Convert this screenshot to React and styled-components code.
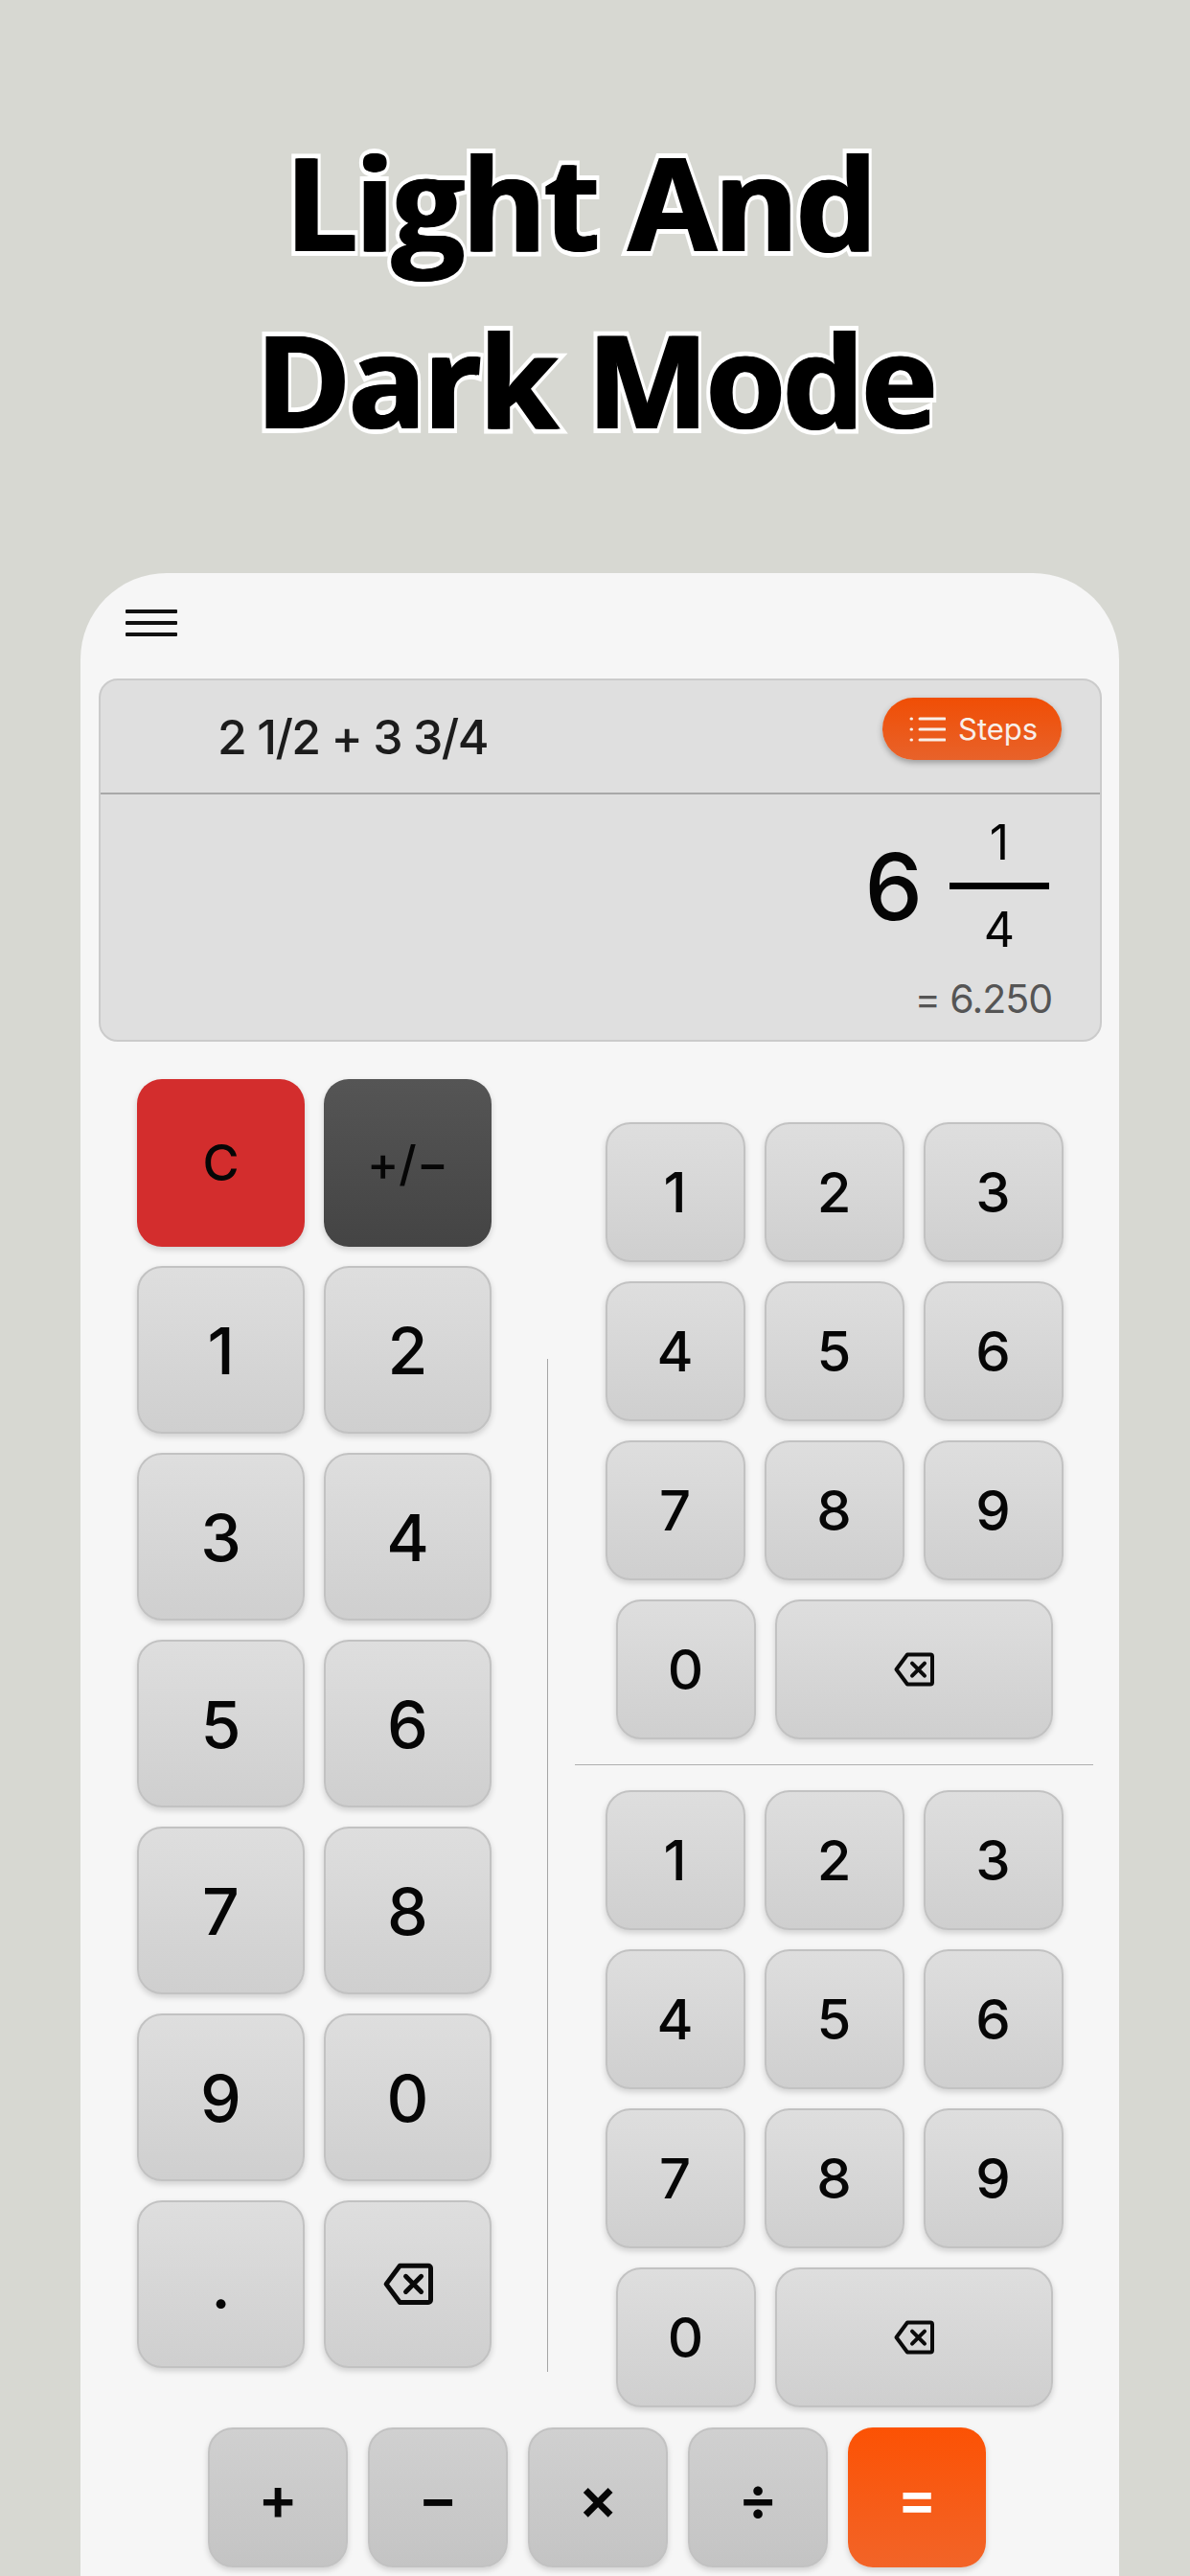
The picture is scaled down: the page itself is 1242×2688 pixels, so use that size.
import styled, { createGlobalStyle } from 'styled-components'

const GlobalStyle = createGlobalStyle`
  html, body {
    margin: 0;
    padding: 0;
    background: #d7d8d2;
  }
  * {
    box-sizing: border-box;
  }
`

const Screen = styled.div`
  width: 1242px;
  height: 2688px;
  overflow: hidden;
  display: flex;
  flex-direction: column;
  background: #d7d8d2;
  font-family: Inter, 'Liberation Sans', sans-serif;
`

const Title = styled.h1`
  margin: 0;
  padding-top: 118px;
  height: 598px;
  font-family: 'Open Sans', sans-serif;
  font-size: 134px;
  font-weight: 700;
  line-height: 185px;
  letter-spacing: -2.6px;
  text-align: center;
  color: #000;
  -webkit-text-stroke: 10px #fff;
  paint-order: stroke fill;
`

const TitleLine = styled.div`
  white-space: pre;
  text-shadow: 2px 0 0 #000, -1px 0 0 #000;
`

const Card = styled.div`
  flex: 1;
  margin-left: 84px;
  width: 1084px;
  padding: 0 18px 0 19px;
  background: #f6f6f6;
  border-radius: 90px 90px 0 0;
  display: flex;
  flex-direction: column;
`

const Hamburger = styled.div`
  margin: 38px 0 0 28px;
  width: 54px;
  height: 72px;
  display: flex;
  flex-direction: column;
  gap: 8px;
`

const HamburgerLine = styled.span`
  display: block;
  height: 4px;
  border-radius: 1px;
  background: #111;
`

const Display = styled.div`
  height: 379px;
  background: #dfdfdf;
  border: 2px solid #cbcbcb;
  border-radius: 20px;
  display: flex;
  flex-direction: column;
`

const ExpressionRow = styled.div`
  height: 119px;
  flex-shrink: 0;
  padding: 18px 40px 0 122px;
  border-bottom: 2px solid #a8a8a8;
  display: flex;
  align-items: flex-start;
  justify-content: space-between;
`

const Expression = styled.div`
  margin-top: 6px;
  font-size: 50px;
  font-weight: 500;
  line-height: 70px;
  color: #1c1c1c;
  letter-spacing: -1.5px;
`

const StepsButton = styled.button`
  width: 187px;
  height: 65px;
  padding: 0 0 0 28px;
  border: 0;
  border-radius: 33px;
  background: linear-gradient(#f04e05, #e8622a);
  box-shadow: 0 3px 6px rgba(0, 0, 0, 0.3);
  color: #f8efe9;
  display: flex;
  align-items: center;
  gap: 13px;
  font-family: Inter, sans-serif;
  font-size: 31px;
`

const ResultArea = styled.div`
  flex: 1;
  padding: 8px 53px 0 0;
  display: flex;
  flex-direction: column;
  align-items: flex-end;
`

const MixedNumber = styled.div`
  display: flex;
  align-items: center;
  gap: 28px;
  color: #050505;
`

const Whole = styled.div`
  font-size: 96px;
  font-weight: 500;
  line-height: 100px;
`

const Fraction = styled.div`
  width: 104px;
  display: flex;
  flex-direction: column;
  align-items: center;
  font-size: 50px;
  line-height: 84px;
`

const FractionBar = styled.div`
  width: 100%;
  height: 7px;
  background: #000;
`

const Decimal = styled.div`
  margin: 6px -3px 0 0;
  font-size: 41px;
  line-height: 48px;
  color: #555;
  letter-spacing: -1px;
`

const Keypad = styled.div`
  margin-top: 39px;
  padding-left: 40px;
  display: flex;
  align-items: flex-start;
`

const LeftPad = styled.div`
  width: 369px;
  display: grid;
  grid-template-columns: repeat(2, 175px);
  grid-auto-rows: 175px;
  gap: 20px;
`

const VerticalRule = styled.div`
  margin: 292px 0 0 59px;
  width: 1px;
  height: 1057px;
  background: #a6a6a6;
`

const RightColumn = styled.div`
  margin-left: 28px;
  width: 541px;
  padding-top: 45px;
`

const NumberGroup = styled.div`
  display: flex;
  flex-direction: column;
  gap: 20px;
`

const KeyRow = styled.div`
  display: flex;
  justify-content: center;
  gap: ${(p) => p.$gap || 20}px;
`

const HorizontalRule = styled.div`
  margin: 26px 0;
  height: 1px;
  background: #aeaeae;
`

const Key = styled.button`
  flex-shrink: 0;
  width: ${(p) => p.$w || 146}px;
  height: ${(p) => p.$h || 146}px;
  padding: 0;
  border: 2px solid #c2c2c2;
  border-radius: 26px;
  background: linear-gradient(#dedede, #cfcfcf);
  box-shadow: 0 3px 6px rgba(0, 0, 0, 0.16);
  display: flex;
  align-items: center;
  justify-content: center;
  color: #060606;
  font-family: Inter, sans-serif;
  font-weight: 500;
  font-size: ${(p) => p.$size || 58}px;
`

const ClearKey = styled(Key)`
  border: 0;
  background: #d32d2d;
  font-size: 52px;
`

const SignKey = styled(Key)`
  border: 0;
  background: linear-gradient(#555, #444);
  font-size: 50px;
`

const OperatorRow = styled(KeyRow)`
  margin-top: 21px;
  padding-right: 7px;
`

const OperatorKey = styled(Key)`
  background: linear-gradient(#d0d0d0, #c4c4c4);
  font-weight: 600;
  font-size: 62px;
`

const EqualsKey = styled(OperatorKey)`
  border: 0;
  background: linear-gradient(#fc5204, #f26428);
  color: #fff;
`

const BackspaceIcon = ({ size }) => (
  <svg width={size} height={size * 0.86} viewBox="0 0 42 36" fill="none" stroke="#0a0a0a" strokeWidth="4" strokeLinejoin="round" strokeLinecap="round">
    <path d="M14 2.5h24a2 2 0 0 1 2 2v27a2 2 0 0 1-2 2H14L2.5 18z" />
    <path d="M19 11.5l13 13M32 11.5l-13 13" />
  </svg>
)

const ListIcon = () => (
  <svg width="38" height="30" viewBox="0 0 38 30" fill="none" stroke="#f8efe9" strokeWidth="3" strokeLinecap="round">
    <path d="M11 4h26M11 15h26M11 26h26" />
    <path d="M2 4h.5M2 15h.5M2 26h.5" />
  </svg>
)

const NumberKeys = () => (
  <NumberGroup>
    {[['1', '2', '3'], ['4', '5', '6'], ['7', '8', '9']].map((row) => (
      <KeyRow key={row[0]}>
        {row.map((n) => (
          <Key key={n}>{n}</Key>
        ))}
      </KeyRow>
    ))}
    <KeyRow>
      <Key>0</Key>
      <Key $w={290}>
        <BackspaceIcon size={42} />
      </Key>
    </KeyRow>
  </NumberGroup>
)

export default function App() {
  const leftKeys = ['1', '2', '3', '4', '5', '6', '7', '8', '9', '0', '.']

  return (
    <Screen>
      <GlobalStyle />
      <Title>
        <TitleLine>{'Light And '}</TitleLine>
        <TitleLine>Dark Mode</TitleLine>
      </Title>
      <Card>
        <Hamburger>
          <HamburgerLine />
          <HamburgerLine />
          <HamburgerLine />
        </Hamburger>
        <Display>
          <ExpressionRow>
            <Expression>2 1/2 + 3 3/4</Expression>
            <StepsButton>
              <ListIcon />
              Steps
            </StepsButton>
          </ExpressionRow>
          <ResultArea>
            <MixedNumber>
              <Whole>6</Whole>
              <Fraction>
                <span>1</span>
                <FractionBar />
                <span>4</span>
              </Fraction>
            </MixedNumber>
            <Decimal>= 6.250</Decimal>
          </ResultArea>
        </Display>
        <Keypad>
          <LeftPad>
            <ClearKey $w={175} $h={175}>C</ClearKey>
            <SignKey $w={175} $h={175}>+/−</SignKey>
            {leftKeys.map((k) => (
              <Key key={k} $w={175} $h={175} $size={68}>
                {k}
              </Key>
            ))}
            <Key $w={175} $h={175}>
              <BackspaceIcon size={52} />
            </Key>
          </LeftPad>
          <VerticalRule />
          <RightColumn>
            <NumberKeys />
            <HorizontalRule />
            <NumberKeys />
          </RightColumn>
        </Keypad>
        <OperatorRow $gap={21}>
          <OperatorKey>+</OperatorKey>
          <OperatorKey>−</OperatorKey>
          <OperatorKey>×</OperatorKey>
          <OperatorKey>÷</OperatorKey>
          <EqualsKey $w={144}>=</EqualsKey>
        </OperatorRow>
      </Card>
    </Screen>
  )
}
